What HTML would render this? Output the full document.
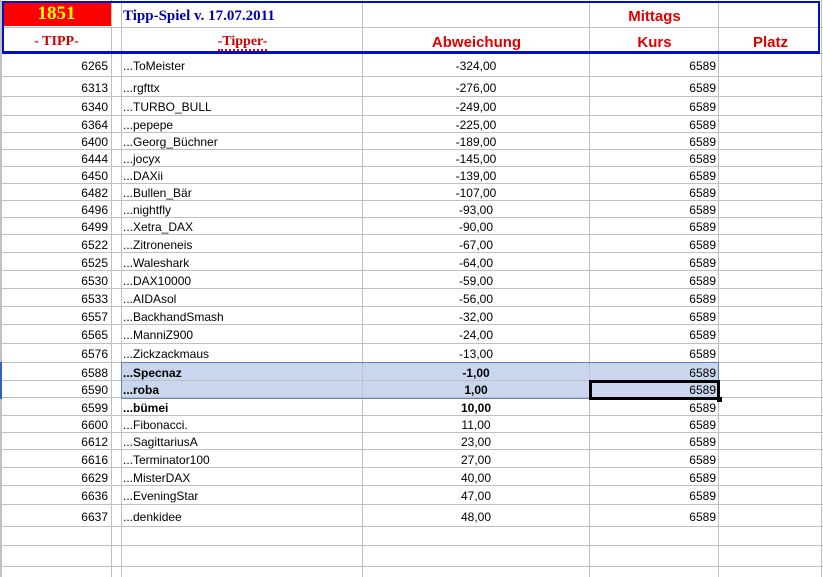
<!DOCTYPE html>
<html><head><meta charset="utf-8"><style>
body{margin:0;width:823px;height:570px;overflow:hidden;background:#fff;position:relative;font-family:"Liberation Sans",Arial,sans-serif;font-size:12px;color:#000}
.r{position:absolute;left:0;width:823px;border-bottom:1px solid #c0c0c0;box-sizing:border-box}
.c{position:absolute;top:0;bottom:0;border-right:1px solid #c0c0c0;box-sizing:border-box;white-space:nowrap;display:flex;align-items:center;overflow:visible;padding-top:2px}
.a{left:0;width:112px;justify-content:flex-end;padding-right:3px;border-left:2px solid #c0c0c0}
.b{left:112px;width:10px}
.n{left:122px;width:241px;padding-left:1px}
.d{left:363px;width:227px;justify-content:center}
.e{left:590px;width:129px;justify-content:flex-end;padding-right:2px}
.f{left:719px;width:103px}
.sel .n,.sel .d,.sel .e{background:#c9d6ee}
.bold{font-weight:bold;font-size:12px}
.hd{position:absolute;font-weight:bold;color:#e00000;font-size:15px}
.ser{font-family:"Liberation Serif",serif;font-weight:bold}
</style></head><body>
<div class="r" style="top:0;height:28px"><div class="c a"></div><div class="c b"></div><div class="c n"></div><div class="c d"></div><div class="c e"></div><div class="c f"></div></div>
<div class="r" style="top:28px;height:26px"><div class="c a"></div><div class="c b"></div><div class="c n"></div><div class="c d"></div><div class="c e"></div><div class="c f"></div></div>
<div style="position:absolute;left:2px;top:2px;width:109px;height:24px;background:#ff0000"></div>
<div class="ser" style="position:absolute;left:2px;top:3px;width:109px;text-align:center;color:#ffff00;font-size:19px">1851</div>
<div class="ser" style="position:absolute;left:123px;top:8px;color:#0000b0;font-size:15px">Tipp-Spiel v. 17.07.2011</div>
<div class="ser" style="position:absolute;left:2px;top:34px;width:109px;text-align:center;color:#d00000;font-size:14px">- TIPP-</div>
<div class="ser" style="position:absolute;left:122px;top:34px;width:241px;text-align:center;color:#d00000;font-size:14px"><span style="border-bottom:2px dotted #e00000">-Tipper-</span></div>
<div class="hd" style="left:590px;top:8px;width:129px;text-align:center">Mittags</div>
<div class="hd" style="left:363px;top:34px;width:227px;text-align:center">Abweichung</div>
<div class="hd" style="left:590px;top:34px;width:129px;text-align:center">Kurs</div>
<div class="hd" style="left:719px;top:34px;width:103px;text-align:center">Platz</div>
<div style="position:absolute;left:2px;top:1px;width:818px;height:53px;border:2px solid #0010c8;border-bottom-width:3px;box-sizing:border-box"></div>

<div class="r" style="top:54px;height:23px"><div class="c a">6265</div><div class="c b"></div><div class="c n">...ToMeister</div><div class="c d">-324,00</div><div class="c e">6589</div><div class="c f"></div></div>
<div class="r" style="top:77px;height:20px"><div class="c a">6313</div><div class="c b"></div><div class="c n">...rgfttx</div><div class="c d">-276,00</div><div class="c e">6589</div><div class="c f"></div></div>
<div class="r" style="top:97px;height:19px"><div class="c a">6340</div><div class="c b"></div><div class="c n">...TURBO_BULL</div><div class="c d">-249,00</div><div class="c e">6589</div><div class="c f"></div></div>
<div class="r" style="top:116px;height:17px"><div class="c a">6364</div><div class="c b"></div><div class="c n">...pepepe</div><div class="c d">-225,00</div><div class="c e">6589</div><div class="c f"></div></div>
<div class="r" style="top:133px;height:17px"><div class="c a">6400</div><div class="c b"></div><div class="c n">...Georg_Büchner</div><div class="c d">-189,00</div><div class="c e">6589</div><div class="c f"></div></div>
<div class="r" style="top:150px;height:17px"><div class="c a">6444</div><div class="c b"></div><div class="c n">...jocyx</div><div class="c d">-145,00</div><div class="c e">6589</div><div class="c f"></div></div>
<div class="r" style="top:167px;height:17px"><div class="c a">6450</div><div class="c b"></div><div class="c n">...DAXii</div><div class="c d">-139,00</div><div class="c e">6589</div><div class="c f"></div></div>
<div class="r" style="top:184px;height:17px"><div class="c a">6482</div><div class="c b"></div><div class="c n">...Bullen_Bär</div><div class="c d">-107,00</div><div class="c e">6589</div><div class="c f"></div></div>
<div class="r" style="top:201px;height:17px"><div class="c a">6496</div><div class="c b"></div><div class="c n">...nightfly</div><div class="c d">-93,00</div><div class="c e">6589</div><div class="c f"></div></div>
<div class="r" style="top:218px;height:17px"><div class="c a">6499</div><div class="c b"></div><div class="c n">...Xetra_DAX</div><div class="c d">-90,00</div><div class="c e">6589</div><div class="c f"></div></div>
<div class="r" style="top:235px;height:18px"><div class="c a">6522</div><div class="c b"></div><div class="c n">...Zitroneneis</div><div class="c d">-67,00</div><div class="c e">6589</div><div class="c f"></div></div>
<div class="r" style="top:253px;height:18px"><div class="c a">6525</div><div class="c b"></div><div class="c n">...Waleshark</div><div class="c d">-64,00</div><div class="c e">6589</div><div class="c f"></div></div>
<div class="r" style="top:271px;height:18px"><div class="c a">6530</div><div class="c b"></div><div class="c n">...DAX10000</div><div class="c d">-59,00</div><div class="c e">6589</div><div class="c f"></div></div>
<div class="r" style="top:289px;height:18px"><div class="c a">6533</div><div class="c b"></div><div class="c n">...AIDAsol</div><div class="c d">-56,00</div><div class="c e">6589</div><div class="c f"></div></div>
<div class="r" style="top:307px;height:18px"><div class="c a">6557</div><div class="c b"></div><div class="c n">...BackhandSmash</div><div class="c d">-32,00</div><div class="c e">6589</div><div class="c f"></div></div>
<div class="r" style="top:325px;height:19px"><div class="c a">6565</div><div class="c b"></div><div class="c n">...ManniZ900</div><div class="c d">-24,00</div><div class="c e">6589</div><div class="c f"></div></div>
<div class="r" style="top:344px;height:19px"><div class="c a">6576</div><div class="c b"></div><div class="c n">...Zickzackmaus</div><div class="c d">-13,00</div><div class="c e">6589</div><div class="c f"></div></div>
<div class="r sel" style="top:363px;height:18px"><div class="c a">6588</div><div class="c b"></div><div class="c n bold">...Specnaz</div><div class="c d bold">-1,00</div><div class="c e">6589</div><div class="c f"></div></div>
<div class="r sel" style="top:381px;height:17px"><div class="c a">6590</div><div class="c b"></div><div class="c n bold">...roba</div><div class="c d bold">1,00</div><div class="c e">6589</div><div class="c f"></div></div>
<div class="r" style="top:398px;height:18px"><div class="c a">6599</div><div class="c b"></div><div class="c n bold">...bümei</div><div class="c d bold">10,00</div><div class="c e">6589</div><div class="c f"></div></div>
<div class="r" style="top:416px;height:17px"><div class="c a">6600</div><div class="c b"></div><div class="c n">...Fibonacci.</div><div class="c d">11,00</div><div class="c e">6589</div><div class="c f"></div></div>
<div class="r" style="top:433px;height:17px"><div class="c a">6612</div><div class="c b"></div><div class="c n">...SagittariusA</div><div class="c d">23,00</div><div class="c e">6589</div><div class="c f"></div></div>
<div class="r" style="top:450px;height:18px"><div class="c a">6616</div><div class="c b"></div><div class="c n">...Terminator100</div><div class="c d">27,00</div><div class="c e">6589</div><div class="c f"></div></div>
<div class="r" style="top:468px;height:18px"><div class="c a">6629</div><div class="c b"></div><div class="c n">...MisterDAX</div><div class="c d">40,00</div><div class="c e">6589</div><div class="c f"></div></div>
<div class="r" style="top:486px;height:19px"><div class="c a">6636</div><div class="c b"></div><div class="c n">...EveningStar</div><div class="c d">47,00</div><div class="c e">6589</div><div class="c f"></div></div>
<div class="r" style="top:505px;height:22px"><div class="c a">6637</div><div class="c b"></div><div class="c n">...denkidee</div><div class="c d">48,00</div><div class="c e">6589</div><div class="c f"></div></div>
<div class="r" style="top:527px;height:19px"><div class="c a"></div><div class="c b"></div><div class="c n"></div><div class="c d"></div><div class="c e"></div><div class="c f"></div></div>
<div class="r" style="top:546px;height:21px"><div class="c a"></div><div class="c b"></div><div class="c n"></div><div class="c d"></div><div class="c e"></div><div class="c f"></div></div>
<div class="r" style="top:567px;height:10px;border:none"><div class="c a"></div><div class="c b"></div><div class="c n"></div><div class="c d"></div><div class="c e"></div><div class="c f"></div></div>
<div style="position:absolute;left:121px;top:362px;width:598px;height:37px;border:1px solid #6080c0;box-sizing:border-box"></div>
<div style="position:absolute;left:0;top:362px;width:2px;height:37px;background:#3060c0"></div>
<div style="position:absolute;left:589px;top:380px;width:131px;height:20px;border:3px solid #000;box-sizing:border-box"></div>
<div style="position:absolute;left:717px;top:397px;width:5px;height:5px;background:#000"></div>
</body></html>
